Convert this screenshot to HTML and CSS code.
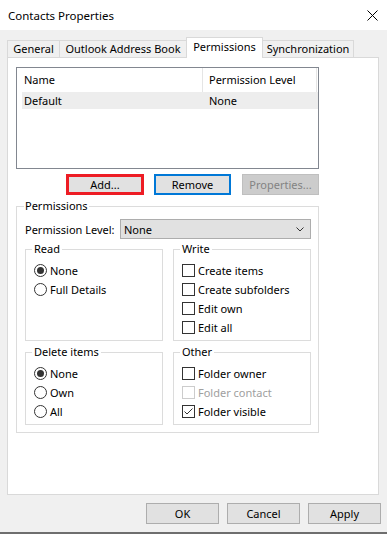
FILE: index.html
```html
<!DOCTYPE html>
<html lang="en">
<head>
    <meta charset="UTF-8">
    <meta name="viewport" content="width=device-width, initial-scale=1.0">
    <title>Contacts Properties</title>
    <link rel="stylesheet" href="styles.css">
</head>
<body>
    <div class="window">
        <div class="titlebar">
            <span class="title">Contacts Properties</span>
            <svg class="close" viewBox="0 0 11 11" width="11" height="11">
                <path d="M0.5 0.5 L10.5 10.5 M10.5 0.5 L0.5 10.5" stroke="#000" stroke-width="1" fill="none"/>
            </svg>
        </div>

        <div class="dialog">
            <div class="tabs">
                <div class="tab tab-general">General</div>
                <div class="tab tab-oab">Outlook Address Book</div>
                <div class="tab tab-perm active">Permissions</div>
                <div class="tab tab-sync">Synchronization</div>
            </div>

            <div class="panel">
                <div class="listbox">
                    <div class="list-head">
                        <div class="col-name">Name</div>
                        <div class="col-level">Permission Level</div>
                    </div>
                    <div class="list-row">
                        <div class="col-name">Default</div>
                        <div class="col-level">None</div>
                    </div>
                </div>

                <div class="list-buttons">
                    <button class="btn btn-add">Add...</button>
                    <button class="btn btn-focus">Remove</button>
                    <button class="btn" disabled>Properties...</button>
                </div>

                <fieldset class="perms">
                    <legend>Permissions</legend>
                    <div class="level-row">
                        <span class="level-label">Permission Level:</span>
                        <div class="select">
                            <span>None</span>
                            <svg viewBox="0 0 8 5" width="8" height="5">
                                <polyline points="0.5,0.5 4,4 7.5,0.5" stroke="#333" stroke-width="1" fill="none"/>
                            </svg>
                        </div>
                    </div>

                    <div class="group-grid">
                        <fieldset class="group">
                            <legend>Read</legend>
                            <div class="opt"><span class="radio on"></span>None</div>
                            <div class="opt"><span class="radio"></span>Full Details</div>
                        </fieldset>
                        <fieldset class="group">
                            <legend>Write</legend>
                            <div class="opt"><span class="check"></span>Create items</div>
                            <div class="opt"><span class="check"></span>Create subfolders</div>
                            <div class="opt"><span class="check"></span>Edit own</div>
                            <div class="opt"><span class="check"></span>Edit all</div>
                        </fieldset>
                        <fieldset class="group">
                            <legend>Delete items</legend>
                            <div class="opt"><span class="radio on"></span>None</div>
                            <div class="opt"><span class="radio"></span>Own</div>
                            <div class="opt"><span class="radio"></span>All</div>
                        </fieldset>
                        <fieldset class="group">
                            <legend>Other</legend>
                            <div class="opt"><span class="check"></span>Folder owner</div>
                            <div class="opt disabled"><span class="check"></span>Folder contact</div>
                            <div class="opt">
                                <span class="check">
                                    <svg viewBox="0 0 11 11" width="11" height="11">
                                        <polyline points="1.5,5.5 4,8 9.5,2.5" stroke="#333" stroke-width="1" fill="none"/>
                                    </svg>
                                </span>Folder visible
                            </div>
                        </fieldset>
                    </div>
                </fieldset>
            </div>
        </div>

        <div class="footer">
            <button class="btn">OK</button>
            <button class="btn">Cancel</button>
            <button class="btn">Apply</button>
        </div>
    </div>
</body>
</html>
```

FILE: styles.css
```css
* {
    box-sizing: border-box;
}

body {
    margin: 0;
    font-family: 'Noto Sans', 'Open Sans', sans-serif;
    font-size: 11px;
    color: #000;
    white-space: nowrap;
}

.window {
    width: 387px;
    height: 534px;
    background: #f0f0f0;
    border-bottom: 2px solid #6e6e6e;
    display: flex;
    flex-direction: column;
}

.titlebar {
    height: 30px;
    background: #fff;
    display: flex;
    align-items: center;
    justify-content: space-between;
    padding: 0 9px 0 8px;
}

.title {
    font-size: 11.5px;
}

.dialog {
    padding: 7px 8px 0 7px;
}

/* tabs */
.tabs {
    display: flex;
    align-items: flex-end;
    height: 20px;
}

.tab {
    height: 17px;
    line-height: 16px;
    text-align: center;
    background: #f0f0f0;
    border: 1px solid #d9d9d9;
    border-bottom: none;
    margin-left: -1px;
}

.tab-general { width: 53px; margin-left: 0; }
.tab-oab { width: 128px; }
.tab-perm { width: 77px; }
.tab-sync { width: 92px; }

.tab.active {
    height: 21px;
    line-height: 17px;
    background: #fff;
    margin-bottom: -1px;
    position: relative;
    z-index: 1;
}

.panel {
    height: 438px;
    background: #fff;
    border: 1px solid #d9d9d9;
    padding: 9px 0 0 8px;
}

/* list */
.listbox {
    width: 303px;
    height: 102px;
    border: 1px solid #828790;
}

.list-head {
    display: flex;
    height: 24px;
    line-height: 24px;
}

.list-head .col-name {
    width: 185px;
    padding-left: 7px;
}

.list-head .col-level {
    width: 115px;
    padding-left: 6px;
    border-left: 1px solid #e5e5e5;
    border-right: 1px solid #e5e5e5;
}

.list-row {
    display: flex;
    height: 17px;
    line-height: 17px;
    margin-left: 5px;
    background: #ededed;
}

.list-row .col-name {
    width: 180px;
    padding-left: 2px;
}

.list-row .col-level {
    padding-left: 7px;
}

/* buttons */
.btn {
    height: 21px;
    padding: 0;
    font-family: inherit;
    font-size: 11px;
    color: #000;
    background: #e1e1e1;
    border: 1px solid #adadad;
}

.btn:disabled {
    background: #cccccc;
    border-color: #bfbfbf;
    color: #838383;
}

.list-buttons {
    width: 303px;
    margin-top: 5px;
    display: flex;
    justify-content: flex-end;
    gap: 10px;
}

.list-buttons .btn {
    width: 77px;
}

.list-buttons .btn-add {
    width: 78px;
    border: 3px solid #ed1c24;
}

.list-buttons .btn-focus {
    border: 2px solid #0078d7;
    margin-right: 1px;
}

/* permissions group */
fieldset {
    margin: 0;
    min-inline-size: 0;
    border: 1px solid #dcdcdc;
}

legend {
    line-height: 16px;
}

.perms {
    width: 303px;
    margin-top: 3px;
    padding: 5px 7px 7px 8px;
}

.perms > legend {
    padding: 0 1px;
    margin-left: -1px;
}

.level-row {
    display: flex;
    align-items: center;
    height: 20px;
}

.level-label {
    width: 95px;
}

.select {
    flex: 1;
    height: 20px;
    background: #e1e1e1;
    border: 1px solid #adadad;
    display: flex;
    align-items: center;
    justify-content: space-between;
    padding: 0 6px 0 3px;
}

.group-grid {
    margin-top: 2px;
    display: grid;
    grid-template-columns: 138px 138px;
    column-gap: 10px;
    row-gap: 3px;
}

.group {
    padding: 4px 8px 3px;
}

.group > legend {
    padding: 0 2px;
    margin-left: -2px;
}

.opt {
    display: flex;
    align-items: center;
    gap: 3px;
    height: 19px;
}

.opt.disabled {
    color: #a0a0a0;
}

.radio {
    width: 13px;
    height: 13px;
    border: 1px solid #333;
    border-radius: 50%;
    background: #fff;
    display: grid;
    place-items: center;
}

.radio.on::after {
    content: '';
    width: 7px;
    height: 7px;
    border-radius: 50%;
    background: #333;
}

.check {
    width: 13px;
    height: 13px;
    border: 1px solid #333;
    background: #fff;
    display: flex;
}

.opt.disabled .check {
    border-color: #cccccc;
}

.footer {
    margin-top: 8px;
    padding-right: 6px;
    display: flex;
    justify-content: flex-end;
    gap: 8px;
}

.footer .btn {
    width: 73px;
}
```
